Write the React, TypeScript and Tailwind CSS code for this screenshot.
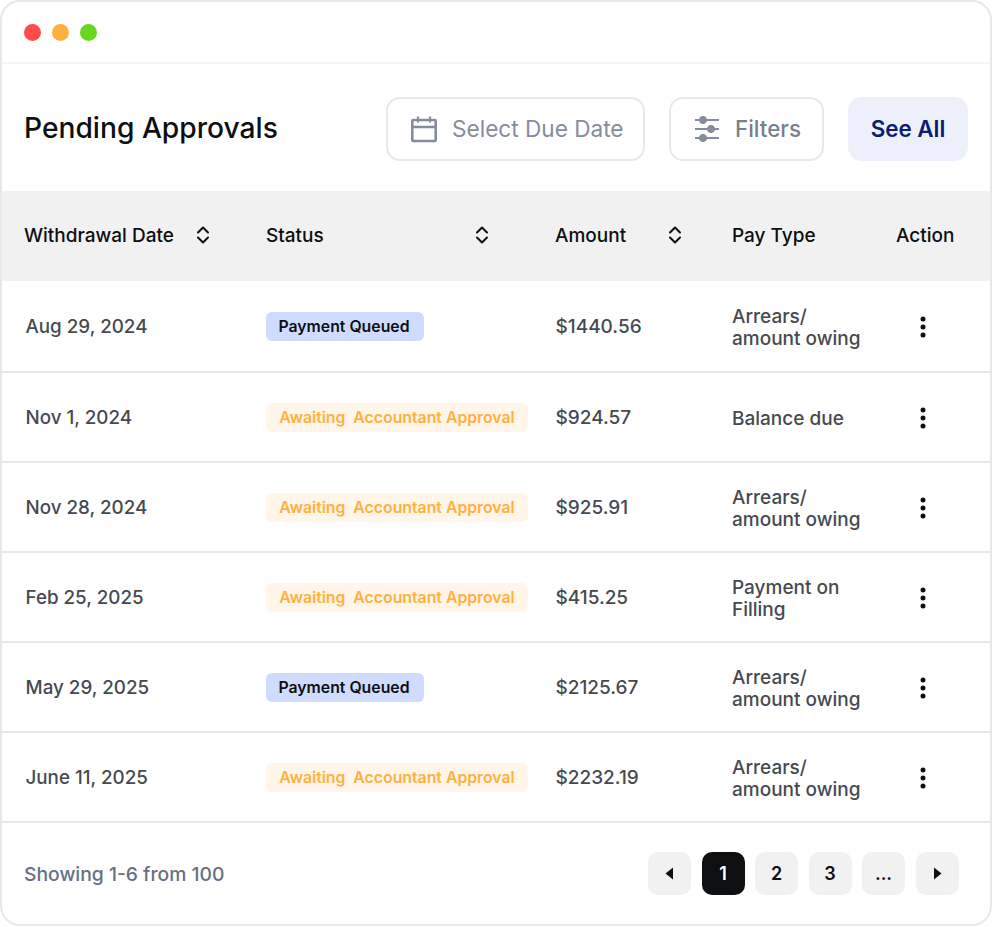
import React from "react";

const cols = "grid grid-cols-[264px_290px_176px_164px_1fr]";

function Sort({ className = "" }: { className?: string }) {
  return (
    <svg width="14" height="20" viewBox="0 0 14 20" fill="none" className={className}>
      <path d="M2 7.5 7 2.5l5 5M2 12.5l5 5 5-5" stroke="#0d0f11" strokeWidth="2" strokeLinecap="round" strokeLinejoin="round" />
    </svg>
  );
}

function Dots() {
  return (
    <svg width="6" height="22" viewBox="0 0 6 22" fill="#0d0f11">
      <circle cx="3" cy="3" r="2.5" />
      <circle cx="3" cy="11" r="2.5" />
      <circle cx="3" cy="19" r="2.5" />
    </svg>
  );
}

function Queued() {
  return (
    <span className="inline-flex h-[29px] w-[158px] items-center justify-center rounded-[6px] bg-[#d0dcff] pr-[2px] pt-[2px] text-[15.8px] font-semibold text-[#0d0f11]">
      Payment Queued
    </span>
  );
}

function Awaiting() {
  return (
    <span className="inline-flex h-[29px] w-[262px] items-center justify-center whitespace-pre rounded-[6px] bg-[#fff5e8] pt-[2px] text-[15.8px] font-semibold text-[#ffb03f]">
      Awaiting  Accountant Approval
    </span>
  );
}

const rows: { date: string; queued: boolean; amount: string; pay: string[]; h: string }[] = [
  { date: "Aug 29, 2024", queued: true, amount: "$1440.56", pay: ["Arrears/", "amount owing"], h: "h-[92px]" },
  { date: "Nov 1, 2024", queued: false, amount: "$924.57", pay: ["Balance due"], h: "h-[90px]" },
  { date: "Nov 28, 2024", queued: false, amount: "$925.91", pay: ["Arrears/", "amount owing"], h: "h-[90px]" },
  { date: "Feb 25, 2025", queued: false, amount: "$415.25", pay: ["Payment on", "Filling"], h: "h-[90px]" },
  { date: "May 29, 2025", queued: true, amount: "$2125.67", pay: ["Arrears/", "amount owing"], h: "h-[90px]" },
  { date: "June 11, 2025", queued: false, amount: "$2232.19", pay: ["Arrears/", "amount owing"], h: "h-[90px]" },
];

function PageBtn({ children, active = false }: { children: React.ReactNode; active?: boolean }) {
  return (
    <div
      className={
        active
          ? "flex h-[43px] w-[43px] items-center justify-center rounded-[10px] bg-[#0d0f11] text-[18px] font-semibold text-white"
          : "flex h-[43px] w-[43px] items-center justify-center rounded-[10px] bg-[#f1f1f1] text-[18px] font-semibold text-[#0d0f11]"
      }
    >
      {children}
    </div>
  );
}

export default function App() {
  return (
    <div className="h-[927px] w-[992px] bg-white font-['Inter',sans-serif]">
      <div className="flex h-[926px] w-[992px] flex-col overflow-hidden rounded-[20px] border-2 border-[#e8e8e8] bg-white">
        <div className="flex h-[62px] shrink-0 items-center gap-[11px] border-b-2 border-[#f5f5f5] pl-[22px] pt-[1px]">
          <span className="h-[17px] w-[17px] rounded-full bg-[#ff4a4a]" />
          <span className="h-[17px] w-[17px] rounded-full bg-[#ffb03f]" />
          <span className="h-[17px] w-[17px] rounded-full bg-[#67d81f]" />
        </div>

        <div className="flex h-[127px] shrink-0 items-center pl-[22px] pr-[22px] pt-[2px]">
          <h1 className="text-[28.2px] font-medium text-[#0d0f11]">Pending Approvals</h1>
          <div className="ml-auto flex items-center">
            <div className="flex h-[64px] w-[259px] items-center gap-[14px] rounded-[14px] border-2 border-[#e7e8ee] pl-[22px]">
              <svg width="28" height="28" viewBox="0 0 28 28" fill="none" stroke="#858d9d" strokeWidth="2.6">
                <rect x="2.3" y="5" width="23.4" height="21" rx="1" />
                <path d="M2 12h24" />
                <path d="M8 1.5v6M20 1.5v6" strokeWidth="2.2" />
              </svg>
              <span className="pt-[1px] text-[22.6px] text-[#858d9d]">Select Due Date</span>
            </div>
            <div className="ml-[24px] flex h-[64px] w-[155px] items-center gap-[15px] rounded-[14px] border-2 border-[#e7e8ee] pl-[23px]">
              <svg width="26" height="26" viewBox="0 0 26 26" fill="#858d9d" stroke="#858d9d">
                <path d="M1 4h24M1 13h24M1 22h24" strokeWidth="2.2" fill="none" />
                <circle cx="9" cy="4" r="3.6" />
                <circle cx="17" cy="13" r="3.6" />
                <circle cx="9" cy="22" r="3.6" />
              </svg>
              <span className="text-[22.4px] font-medium text-[#777f90]">Filters</span>
            </div>
            <div className="ml-[24px] flex h-[64px] w-[120px] items-center justify-center rounded-[14px] bg-[#edf0fb] text-[22.4px] font-semibold text-[#0c1b75]">
              See All
            </div>
          </div>
        </div>

        <div className={`${cols} h-[90px] shrink-0 items-center bg-[#f1f1f1] text-[19px] font-medium text-[#0d0f11]`}>
          <div className="flex items-center pl-[22px]">
            <span>Withdrawal Date</span>
            <Sort className="-mt-[2px] ml-[22px]" />
          </div>
          <div className="flex items-center">
            <span>Status</span>
            <Sort className="-mt-[2px] ml-[151px]" />
          </div>
          <div className="flex items-center">
            <span className="-ml-[1px]">Amount</span>
            <Sort className="-mt-[2px] ml-[42px]" />
          </div>
          <div>Pay Type</div>
          <div>Action</div>
        </div>

        {rows.map((r) => (
          <div key={r.date} className={`${cols} ${r.h} shrink-0 items-center border-b-2 border-[#e8e8e8] text-[19px] text-[#464a50]`}>
            <div className="pl-[23.5px] pt-[2px] text-[18.8px] font-medium">{r.date}</div>
            <div className="flex">{r.queued ? <Queued /> : <Awaiting />}</div>
            <div className="-ml-[0.5px] pt-[2px] font-medium">{r.amount}</div>
            <div className="pt-[3px] font-medium leading-[22px]">
              {r.pay.map((l) => (
                <div key={l}>{l}</div>
              ))}
            </div>
            <div className="pl-[24px] pt-[2px]">
              <Dots />
            </div>
          </div>
        ))}

        <div className="flex flex-1 items-center justify-between pl-[22px] pr-[31.5px]">
          <span className="pt-[2px] text-[19.3px] font-medium text-[#667085]">Showing 1-6 from 100</span>
          <div className="flex items-center gap-[10.5px]">
            <PageBtn>
              <svg width="9" height="13" viewBox="0 0 9 13" fill="#0d0f11">
                <path d="M8 0.5v12L0.5 6.5z" />
              </svg>
            </PageBtn>
            <PageBtn active>1</PageBtn>
            <PageBtn>2</PageBtn>
            <PageBtn>3</PageBtn>
            <PageBtn>...</PageBtn>
            <PageBtn>
              <svg width="9" height="13" viewBox="0 0 9 13" fill="#0d0f11">
                <path d="M1 0.5v12L8.5 6.5z" />
              </svg>
            </PageBtn>
          </div>
        </div>
      </div>
    </div>
  );
}
